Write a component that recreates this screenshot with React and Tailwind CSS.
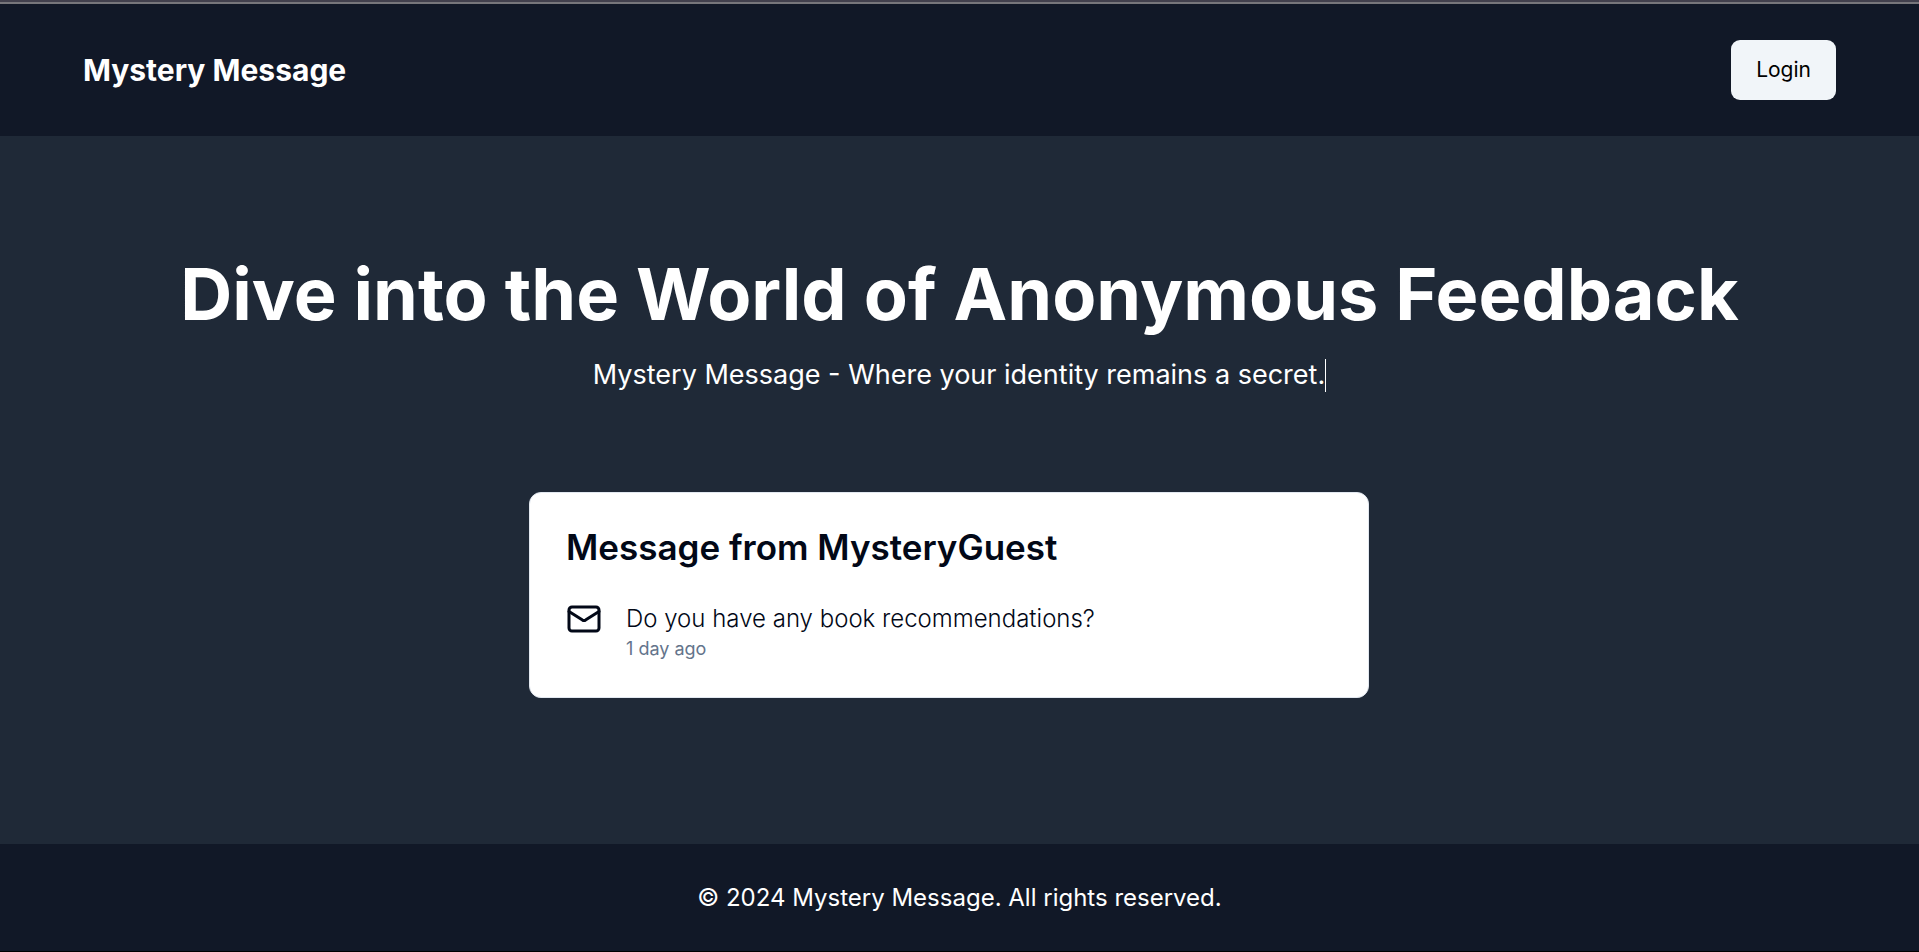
import { Mail } from "lucide-react";

function Navbar() {
  return (
    <nav className="flex items-center justify-between border-t-2 border-[#77767b] bg-[#111827] px-[83px] py-9">
      <a href="#" className="text-3xl leading-9 font-bold">
        Mystery Message
      </a>
      <button
        type="button"
        className="h-[60px] rounded-[9px] bg-slate-100 px-[25px] text-[21px] leading-[30px] text-black"
      >
        Login
      </button>
    </nav>
  );
}

function Hero() {
  return (
    <section className="text-center">
      <h1 className="text-7xl leading-[72px] font-bold">
        Dive into the World of Anonymous Feedback
      </h1>
      <p className="mt-6 flex items-center justify-center text-[27px] leading-[42px]">
        Mystery Message - Where your identity remains a secret.
        <span className="h-[33px] w-px bg-white" />
      </p>
    </section>
  );
}

function MessageCard() {
  return (
    <article className="mr-[21px] w-full max-w-[840px] rounded-xl border border-slate-200 bg-white p-9 text-[#020817]">
      <h2 className="text-[35px] leading-9 font-semibold">
        Message from MysteryGuest
      </h2>
      <div className="mt-9 flex items-start gap-6">
        <Mail size={36} className="shrink-0" />
        <div>
          <p className="text-2xl leading-9 font-light">
            Do you have any book recommendations?
          </p>
          <p className="text-lg leading-6 text-[#64748b]">1 day ago</p>
        </div>
      </div>
    </article>
  );
}

export default function App() {
  return (
    <div className="flex min-h-screen flex-col border-t-2 border-b border-t-[#42404d] border-b-black bg-[#1f2937] font-['Inter',sans-serif] text-white">
      <Navbar />
      <main className="flex grow flex-col items-center gap-24 px-9 pt-[122px]">
        <Hero />
        <MessageCard />
      </main>
      <footer className="bg-[#111827] pt-9 pb-[35px] text-center text-2xl leading-9">
        © 2024 Mystery Message. All rights reserved.
      </footer>
    </div>
  );
}
